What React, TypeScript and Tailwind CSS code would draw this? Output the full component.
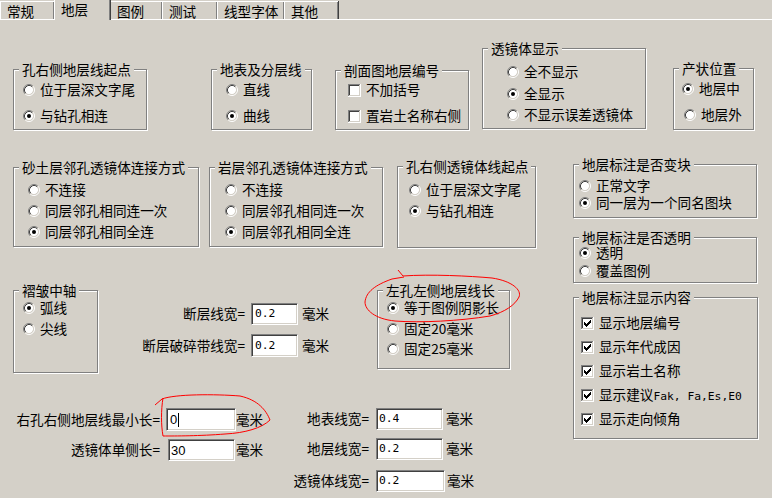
import React from 'react';

function Radio({ checked }: { checked?: boolean }) {
  return (
    <svg width="12" height="12" viewBox="0 0 12 12" className="shrink-0">
      <circle cx="6" cy="6" r="4.2" fill="#fff" />
      <path d="M2.11 9.89A5.5 5.5 0 0 1 9.89 2.11" fill="none" stroke="#808080" />
      <path d="M9.89 2.11A5.5 5.5 0 0 1 2.11 9.89" fill="none" stroke="#fff" />
      <path d="M2.82 9.18A4.5 4.5 0 0 1 9.18 2.82" fill="none" stroke="#404040" />
      <path d="M9.18 2.82A4.5 4.5 0 0 1 2.82 9.18" fill="none" stroke="#d4d0c8" />
      {checked && <circle cx="6" cy="6" r="2" fill="#000" />}
    </svg>
  );
}

function Check({ checked }: { checked?: boolean }) {
  return (
    <svg width="13" height="13" viewBox="0 0 13 13" shapeRendering="crispEdges" className="shrink-0">
      <rect x="0" y="0" width="13" height="13" fill="#fff" />
      <rect x="0" y="0" width="12" height="1" fill="#808080" />
      <rect x="0" y="0" width="1" height="12" fill="#808080" />
      <rect x="1" y="1" width="10" height="1" fill="#404040" />
      <rect x="1" y="1" width="1" height="10" fill="#404040" />
      <rect x="1" y="11" width="11" height="1" fill="#d4d0c8" />
      <rect x="11" y="1" width="1" height="11" fill="#d4d0c8" />
      {checked && (
        <path
          d="M9 3h1v1H9zM8 4h2v1H8zM3 5h1v1H3zM7 5h3v1H7zM3 6h2v1H3zM6 6h3v1H6zM3 7h5v1H3zM4 8h3v1H4zM5 9h1v1H5z"
          fill="#000"
        />
      )}
    </svg>
  );
}

function Group({ title, className, children }: { title: string; className: string; children?: React.ReactNode }) {
  return (
    <div className={`relative shrink-0 border border-[#808080] shadow-[inset_1px_1px_0_#fff,1px_1px_0_#fff] ${className}`}>
      <span className="absolute left-[5px] top-[-8px] whitespace-nowrap bg-[#d4d0c8] px-[3px] leading-[14px]">{title}</span>
      {children}
    </div>
  );
}

function Item({ children, checked, box, className = 'h-[18px]' }: { children: React.ReactNode; checked?: boolean; box?: boolean; className?: string }) {
  return (
    <div className={`flex items-center gap-[5px] whitespace-nowrap ${className}`}>
      {box ? <Check checked={checked} /> : <Radio checked={checked} />}
      <span className="leading-none">{children}</span>
    </div>
  );
}

function Field({ className, children }: { className: string; children?: React.ReactNode }) {
  return (
    <div
      className={`flex shrink-0 items-center border border-b-white border-l-[#808080] border-r-white border-t-[#808080] bg-white shadow-[inset_1px_1px_0_#404040,inset_-1px_-1px_0_#d4d0c8] ${className}`}
    >
      {children}
    </div>
  );
}

const mono = "font-['DejaVu_Sans_Mono',monospace] text-[11.3px] leading-none";

function Tabs() {
  const tab = 'h-[18px] shrink-0 border-l border-t border-white pl-[6px] pt-[2px] leading-[14px] shadow-[inset_-1px_0_0_#808080,1px_0_0_#404040]';
  return (
    <div className="flex h-[20px] items-end border-b border-white">
      <div className={`${tab} w-[54px]`}>常规</div>
      <div className="relative z-10 -mb-[1px] h-[21px] w-[56px] shrink-0 border-l border-white bg-[#d4d0c8] pl-[6px] pt-[3px] leading-[14px] shadow-[inset_-1px_0_0_#808080,1px_0_0_#404040]">
        地层
      </div>
      <div className={`${tab} w-[52px]`}>图例</div>
      <div className={`${tab} w-[55px]`}>测试</div>
      <div className={`${tab} w-[67px]`}>线型字体</div>
      <div className={`${tab} w-[54px]`}>其他</div>
    </div>
  );
}

export default function App() {
  return (
    <div className="relative h-[498px] w-[772px] overflow-hidden bg-[#d4d0c8] font-['Noto_Sans_CJK_SC',sans-serif] text-[13.6px] text-black">
      <Tabs />

      {/* first row of group boxes */}
      <div className="mt-[28px] flex h-[82px] items-start">
        <Group title="孔右侧地层线起点" className="ml-[13px] mt-[21px] flex h-[61px] w-[134px] flex-col gap-[8px] pl-[9px] pt-[11px]">
          <Item>位于层深文字尾</Item>
          <Item checked>与钻孔相连</Item>
        </Group>
        <Group title="地表及分层线" className="ml-[64px] mt-[21px] flex h-[61px] w-[101px] flex-col gap-[8px] pl-[14px] pt-[11px]">
          <Item>直线</Item>
          <Item checked>曲线</Item>
        </Group>
        <Group title="剖面图地层编号" className="ml-[23px] mt-[22px] flex h-[60px] w-[134px] flex-col gap-[8px] pl-[12px] pt-[10px]">
          <Item box>不加括号</Item>
          <Item box>置岩土名称右侧</Item>
        </Group>
        <Group title="透镜体显示" className="ml-[13px] flex h-[81px] w-[164px] flex-col gap-[3.5px] pl-[24px] pt-[14px]">
          <Item>全不显示</Item>
          <Item checked>全显示</Item>
          <Item>不显示误差透镜体</Item>
        </Group>
        <Group title="产状位置" className="ml-[27px] mt-[20px] flex h-[62px] w-[81px] flex-col gap-[8px] pl-[8px] pt-[11px]">
          <Item checked>地层中</Item>
          <Item className="ml-[2px] h-[18px]">地层外</Item>
        </Group>
      </div>

      <div className="mt-[34px] flex items-start">
        <div className="w-[560px] shrink-0">
          {/* second row */}
          <div className="flex h-[84px] items-start">
            <Group title="砂土层邻孔透镜体连接方式" className="ml-[13px] mt-[3px] flex h-[80px] w-[186px] flex-col gap-[3px] pl-[14px] pt-[13px]">
              <Item>不连接</Item>
              <Item>同层邻孔相同连一次</Item>
              <Item checked>同层邻孔相同全连</Item>
            </Group>
            <Group title="岩层邻孔透镜体连接方式" className="ml-[10px] mt-[3px] flex h-[80px] w-[174px] flex-col gap-[3px] pl-[15px] pt-[13px]">
              <Item>不连接</Item>
              <Item>同层邻孔相同连一次</Item>
              <Item checked>同层邻孔相同全连</Item>
            </Group>
            <Group title="孔右侧透镜体线起点" className="ml-[14px] mt-[2px] flex h-[82px] w-[139px] flex-col gap-[3px] pl-[11px] pt-[14px]">
              <Item>位于层深文字尾</Item>
              <Item checked>与钻孔相连</Item>
            </Group>
          </div>

          {/* third row */}
          <div className="mt-[42px] flex h-[83px] items-start">
            <Group title="褶皱中轴" className="ml-[13px] flex h-[83px] w-[85px] flex-col gap-[3px] pl-[9px] pt-[8px]">
              <Item checked>弧线</Item>
              <Item>尖线</Item>
            </Group>
            <div className="flex w-[279px] shrink-0 flex-col">
              <div className="mt-[13px] flex items-center">
                <span className="w-[147px] text-right leading-none">断层线宽=</span>
                <Field className="ml-[6px] h-[22px] w-[47px] pl-[3px]">
                  <span className={mono}>0.2</span>
                </Field>
                <span className="ml-[4px] leading-none">毫米</span>
              </div>
              <div className="mt-[9px] flex items-center">
                <span className="w-[147px] text-right leading-none">断层破碎带线宽=</span>
                <Field className="ml-[6px] h-[23px] w-[47px] pl-[3px]">
                  <span className={mono}>0.2</span>
                </Field>
                <span className="ml-[4px] leading-none">毫米</span>
              </div>
            </div>
            <Group title="左孔左侧地层线长" className="flex h-[79px] w-[133px] flex-col gap-[2.5px] pl-[9px] pt-[8px]">
              <Item checked>等于图例阴影长</Item>
              <Item>固定20毫米</Item>
              <Item>固定25毫米</Item>
            </Group>
          </div>

          {/* bottom edit fields */}
          <div className="mt-[35px] flex items-start">
            <div className="flex w-[280px] shrink-0 flex-col">
              <div className="flex items-center">
                <span className="w-[160px] text-right leading-none">右孔右侧地层线最小长=</span>
                <Field className="ml-[6px] h-[23px] w-[70px] pl-[3px]">
                  <span className="font-['Liberation_Sans',sans-serif] text-[13px] leading-none">0</span>
                  <span className="ml-[1px] h-[14px] w-[1px] bg-black" />
                </Field>
                <span className="leading-none">毫米</span>
              </div>
              <div className="mt-[8px] flex items-center">
                <span className="w-[160px] text-right leading-none">透镜体单侧长=</span>
                <Field className="ml-[8px] h-[22px] w-[67px] pl-[2px]">
                  <span className="font-['Liberation_Sans',sans-serif] text-[13px] leading-none">30</span>
                </Field>
                <span className="ml-[1px] leading-none">毫米</span>
              </div>
            </div>
            <div className="flex flex-col">
              <div className="flex items-center">
                <span className="w-[89px] text-right leading-none">地表线宽=</span>
                <Field className="ml-[7px] h-[22px] w-[67px] pl-[2px]">
                  <span className={mono}>0.4</span>
                </Field>
                <span className="ml-[3px] leading-none">毫米</span>
              </div>
              <div className="mt-[8px] flex items-center">
                <span className="w-[89px] text-right leading-none">地层线宽=</span>
                <Field className="ml-[7px] h-[22px] w-[67px] pl-[2px]">
                  <span className={mono}>0.2</span>
                </Field>
                <span className="ml-[3px] leading-none">毫米</span>
              </div>
              <div className="mt-[10px] flex items-center">
                <span className="w-[89px] text-right leading-none">透镜体线宽=</span>
                <Field className="ml-[7px] h-[22px] w-[69px] pl-[2px]">
                  <span className={mono}>0.2</span>
                </Field>
                <span className="ml-[2px] leading-none">毫米</span>
              </div>
            </div>
          </div>
        </div>

        {/* right column */}
        <div className="ml-[13px] flex flex-col">
          <Group title="地层标注是否变块" className="flex h-[54px] w-[184px] flex-col pl-[5px] pt-[12px]">
            <Item className="h-[17px]">正常文字</Item>
            <Item checked className="h-[17px]">同一层为一个同名图块</Item>
          </Group>
          <Group title="地层标注是否透明" className="mt-[19px] flex h-[46px] w-[184px] flex-col pl-[5px] pt-[6px]">
            <Item checked>透明</Item>
            <Item>覆盖图例</Item>
          </Group>
          <Group title="地层标注显示内容" className="mt-[14px] flex h-[142px] w-[185px] flex-col gap-[6px] pl-[7px] pt-[16px]">
            <Item box checked>显示地层编号</Item>
            <Item box checked>显示年代成因</Item>
            <Item box checked>显示岩土名称</Item>
            <Item box checked>
              显示建议<span className={mono}>Fak, Fa,Es,E0</span>
            </Item>
            <Item box checked>显示走向倾角</Item>
          </Group>
        </div>
      </div>

      {/* red hand-drawn marks */}
      <svg className="pointer-events-none absolute left-0 top-0" width="772" height="498" viewBox="0 0 772 498" fill="none" stroke="#ff0000" strokeWidth="1">
        <path d="M398 270 L403 276 C430 274 470 276 492 278 C512 281 522 290 519 297 C515 305 505 312 490 316 C460 321 420 323 395 321 C375 319 365 310 365 302 C366 292 375 285 392 279 L404 277" />
        <path d="M155 405 L162 399 C175 394 215 394 240 396 C258 400 266 410 270 420 C262 428 245 433 225 434 C200 436 175 436 163 436 C161 425 161 410 163 398" />
      </svg>
    </div>
  );
}
